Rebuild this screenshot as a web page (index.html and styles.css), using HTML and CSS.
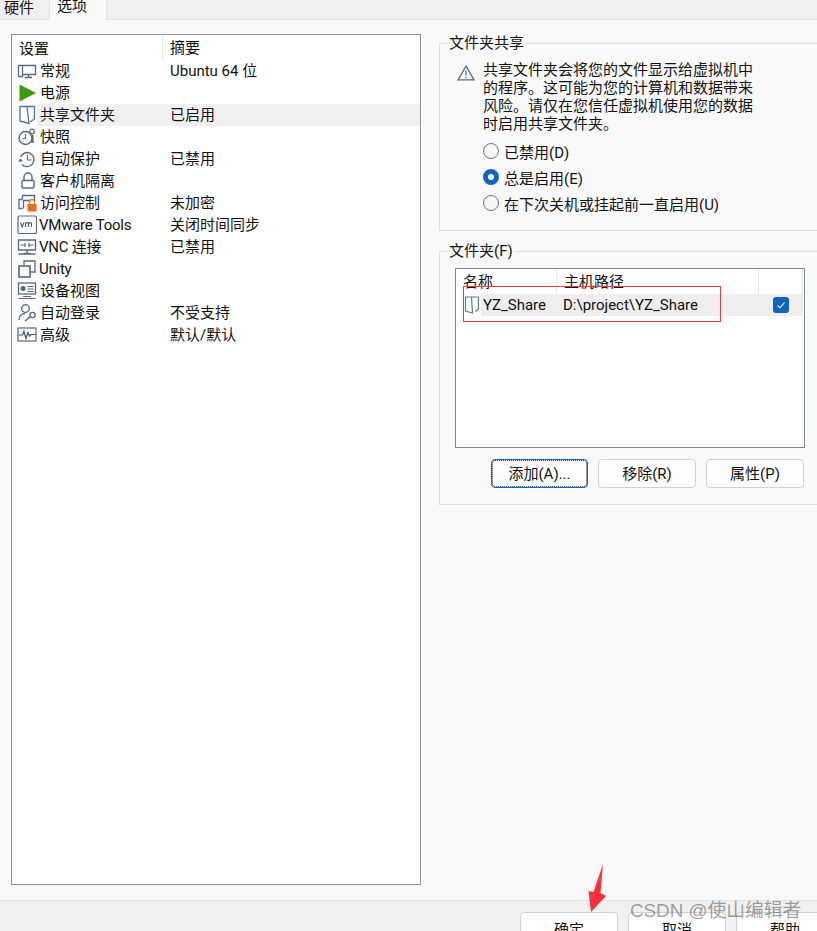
FILE: index.html
```html
<!DOCTYPE html>
<html lang="zh">
<head>
<meta charset="utf-8">
<title>虚拟机设置</title>
<link rel="stylesheet" href="styles.css">
</head>
<body>
<div class="window">
  <div class="tabs">
    <div class="tab">硬件</div>
    <div class="tab active">选项</div>
  </div>
  <div class="content">
    <div class="settings">
      <div class="settings-head"><span class="col-a">设置</span><span class="col-b">摘要</span></div>
      <div class="row">
        <svg class="ico" viewBox="0 0 20 20"><path d="M1.500 4.500h4v11h-4zM6 4.500h12.500v9H6M8 16.500h7M11.500 14v2.500" fill="none" stroke="#56697a" stroke-width="1.300"/></svg>
        <span class="name">常规</span><span class="sum">Ubuntu 64 位</span>
      </div>
      <div class="row">
        <svg class="ico" viewBox="0 0 20 20"><path d="M2.500 1.500 19 10 2.500 18.500z" fill="#3f9a0a"/></svg>
        <span class="name">电源</span>
      </div>
      <div class="row selected">
        <svg class="ico" viewBox="0 0 20 20"><path d="M3 1.500h7l2 17-9-2.500zM10 1.500h7.500V14l-4.500 3" fill="#fff" stroke="#4f7396" stroke-width="1.300"/></svg>
        <span class="name">共享文件夹</span><span class="sum">已启用</span>
      </div>
      <div class="row">
        <svg class="ico" viewBox="0 0 20 20"><circle cx="8.500" cy="11" r="6.500" fill="none" stroke="#56697a" stroke-width="1.400"/><path d="M8.500 7v4.500H5.500" fill="none" stroke="#56697a" stroke-width="1.200"/><circle cx="15" cy="4.500" r="2.300" fill="#fff" stroke="#56697a" stroke-width="1.200"/><path d="M15.500 8v8" stroke="#56697a" stroke-width="2.200"/></svg>
        <span class="name">快照</span>
      </div>
      <div class="row">
        <svg class="ico" viewBox="0 0 20 20"><path d="M3.500 8A7 7 0 1 1 5 15.500" fill="none" stroke="#56697a" stroke-width="1.400"/><path d="M1 12.500h5L3.500 9.500z" fill="#56697a"/><path d="M10.500 6v5H14.500" fill="none" stroke="#56697a" stroke-width="1.200"/></svg>
        <span class="name">自动保护</span><span class="sum">已禁用</span>
      </div>
      <div class="row">
        <svg class="ico" viewBox="0 0 20 20"><path d="M7 9V6a4 4 0 0 1 8 0v3" fill="none" stroke="#56697a" stroke-width="1.400"/><rect x="5" y="9.500" width="12" height="7.500" rx="1" fill="none" stroke="#56697a" stroke-width="1.400"/></svg>
        <span class="name">客户机隔离</span>
      </div>
      <div class="row">
        <svg class="ico" viewBox="0 0 20 20"><path d="M5.500 15.500H2V6.500h3.500M5.500 6.500V2.500h12v5.500" fill="none" stroke="#56697a" stroke-width="1.300"/><path d="M6.500 15.500V7.500h6" fill="none" stroke="#56697a" stroke-width="1.300"/><path d="M12.500 11V9a2.500 2.500 0 0 1 5 0v2" fill="none" stroke="#e9762b" stroke-width="1.300"/><rect x="10.500" y="11" width="9" height="7.500" fill="#ee6a1c"/></svg>
        <span class="name">访问控制</span><span class="sum">未加密</span>
      </div>
      <div class="row">
        <svg class="ico" viewBox="0 0 20 20"><rect x="1" y="1" width="18.500" height="17.500" rx="1.500" fill="#fff" stroke="#56697a" stroke-width="1.200"/><path d="M3.500 7.500l1.700 4.500 1.700-4.500M8.500 12V7.500M8.500 9c.5-1.800 3-1.800 3 0v3M11.500 9c.5-1.800 3-1.800 3 0v3" fill="none" stroke="#465a6b" stroke-width="1.100"/></svg>
        <span class="name narrow">VMware Tools</span><span class="sum">关闭时间同步</span>
      </div>
      <div class="row">
        <svg class="ico" viewBox="0 0 20 20"><path d="M1.500 3h17v10h-17zM7 16.500h6M10 13v3.500M1.500 17h17" fill="none" stroke="#56697a" stroke-width="1.300"/><path d="M3.500 8h4.500M12 8h4.500M8 6v4M12 6v4" stroke="#56697a" stroke-width="1.200"/></svg>
        <span class="name narrow">VNC 连接</span><span class="sum">已禁用</span>
      </div>
      <div class="row">
        <svg class="ico" viewBox="0 0 20 20"><path d="M7 6V2h11v11h-4" fill="none" stroke="#56697a" stroke-width="1.300"/><rect x="2" y="7" width="11" height="11" fill="none" stroke="#56697a" stroke-width="1.600"/></svg>
        <span class="name narrow">Unity</span>
      </div>
      <div class="row">
        <svg class="ico" viewBox="0 0 20 20"><rect x="1.500" y="2" width="17" height="11" fill="none" stroke="#56697a" stroke-width="1.300"/><circle cx="6" cy="7.500" r="2.500" fill="#56697a"/><path d="M10.500 5.500h6M10.500 8h6M10.500 10.500h6M6 15.500h8M1.500 17.500h17" stroke="#56697a" stroke-width="1.200"/></svg>
        <span class="name">设备视图</span>
      </div>
      <div class="row">
        <svg class="ico" viewBox="0 0 20 20"><circle cx="8.500" cy="5.500" r="3.800" fill="none" stroke="#56697a" stroke-width="1.300"/><path d="M2 17c0-4 2.500-6.500 6-6.500" fill="none" stroke="#56697a" stroke-width="1.300"/><circle cx="15.500" cy="12" r="2.600" fill="none" stroke="#56697a" stroke-width="1.300"/><path d="M13.500 13.500 8 18" stroke="#56697a" stroke-width="1.500"/></svg>
        <span class="name">自动登录</span><span class="sum">不受支持</span>
      </div>
      <div class="row">
        <svg class="ico" viewBox="0 0 20 20"><rect x="1" y="3" width="18" height="13" fill="#fff" stroke="#56697a" stroke-width="1.200"/><path d="M1.500 10h4l1.500-3.500 2 7 2-6 1.500 3.500 1.500-1.500h4.500" fill="none" stroke="#3e5161" stroke-width="1.200"/></svg>
        <span class="name">高级</span><span class="sum">默认/默认</span>
      </div>
    </div>
    <div class="side">
      <fieldset class="group share">
        <legend>文件夹共享</legend>
        <div class="notice">
          <svg class="warn" viewBox="0 0 18 16"><path d="M9 1.200 17 14.800H1z" fill="none" stroke="#5c6b78" stroke-width="1.300"/><path d="M9 5.500v5M9 11.700v1.500" stroke="#5c6b78" stroke-width="1.300"/></svg>
          <p>共享文件夹会将您的文件显示给虚拟机中<br>的程序。这可能为您的计算机和数据带来<br>风险。请仅在您信任虚拟机使用您的数据<br>时启用共享文件夹。</p>
        </div>
        <div class="radios">
          <div class="radio"><span class="dot"></span>已禁用(D)</div>
          <div class="radio"><span class="dot on"></span>总是启用(E)</div>
          <div class="radio"><span class="dot"></span>在下次关机或挂起前一直启用(U)</div>
        </div>
      </fieldset>
      <fieldset class="group folders">
        <legend>文件夹(F)</legend>
        <div class="table">
          <div class="thead">
            <span class="th th-name">名称</span><span class="th th-path">主机路径</span><span class="th th-check"></span>
          </div>
          <div class="tr">
            <svg class="fold" viewBox="0 0 16 18"><path d="M1.500 1h6l1 16-7-2zM8 1h6.500v12l-3 2.500" fill="#fff" stroke="#5a7b9c" stroke-width="1.200"/></svg>
            <div class="tr-cells">
              <span class="td-name">YZ_Share</span><span class="td-path">D:\project\YZ_Share</span>
              <span class="check"><svg viewBox="0 0 16 16"><path d="M4.500 8.300 7 10.800l4.500-5.300" fill="none" stroke="#fff" stroke-width="1.100"/></svg></span>
            </div>
          </div>
        </div>
        <div class="actions">
          <button class="btn focus">添加(A)...</button>
          <button class="btn">移除(R)</button>
          <button class="btn">属性(P)</button>
        </div>
      </fieldset>
    </div>
  </div>
  <div class="footer">
    <button class="btn big">确定</button>
    <button class="btn big">取消</button>
    <button class="btn big">帮助</button>
  </div>
  <div class="redbox"></div>
  <svg class="arrow" viewBox="0 0 20 50"><path d="M16 0 13.500 29 19 32 4 48 1.500 27 6.500 28z" fill="#f8303a"/></svg>
  <div class="mark">CSDN @使山编辑者</div>
</div>
</body>
</html>
```
FILE: styles.css
```css
* { box-sizing: border-box; }
html, body { margin: 0; padding: 0; }
body {
  font-family: Roboto, "Noto Sans CJK SC", sans-serif;
  font-size: 15px;
  color: #111;
  background: #f9f9f9;
}
.window {
  position: relative;
  width: 817px;
  height: 931px;
  overflow: hidden;
  display: flex;
  flex-direction: column;
}
.tabs {
  height: 20px;
  flex: none;
  display: flex;
  background: #f0f0f0;
  border-bottom: 1px solid #e3e3e3;
}
.tab {
  width: 50px;
  height: 19px;
  padding-left: 4px;
  line-height: 17px;
  border-right: 1px solid #e3e3e3;
}
.tab.active {
  width: 57px;
  height: 20px;
  padding-left: 7px;
  line-height: 13px;
  background: #f9f9f9;
}
.content {
  flex: 1;
  min-height: 0;
  display: flex;
  padding: 14px 0 15px 11px;
}
.settings {
  width: 410px;
  background: #fff;
  border: 1px solid #8e9199;
}
.settings-head {
  height: 25px;
  display: flex;
  align-items: center;
  margin-bottom: 0;
}
.col-a { width: 150px; padding-left: 7px; }
.col-b { padding-left: 7px; border-left: 1px solid #e5e5e5; height: 24px; line-height: 24px; }
.row {
  height: 22px;
  display: flex;
  align-items: center;
  padding-left: 5px;
  line-height: 22px;
}
.row.selected { background: linear-gradient(to right, transparent 25px, #f0f0f0 25px); }
.ico { width: 20px; height: 20px; flex: none; }
.name { width: 133px; padding-left: 3px; flex: none; white-space: nowrap; }
.name.narrow { padding-left: 2px; letter-spacing: -0.25px; }
.sum { white-space: nowrap; }
.side {
  width: 378px;
  margin-left: 18px;
  display: flex;
  flex-direction: column;
}
.group {
  margin: 0;
  padding: 0;
  min-width: 0;
  border: 1px solid #dedede;
  border-right: 0;
}
.group legend {
  margin-left: 7px;
  padding: 0 2px;
  line-height: 20px;
  height: 20px;
}
.share { height: 198px; margin-top: -1px; }
.notice {
  display: flex;
  padding: 8px 0 0 17px;
}
.warn { width: 18px; height: 16px; flex: none; margin-top: 4px; }
.notice p {
  margin: 0 0 0 8px;
  line-height: 18px;
}
.radios { padding: 5px 0 0 43px; }
.radio {
  height: 26px;
  display: flex;
  align-items: center;
  gap: 5px;
}
.dot {
  width: 16px;
  height: 16px;
  border: 1px solid #727272;
  border-radius: 50%;
  background: #f6f6f6;
  flex: none;
}
.dot.on {
  border: 5px solid #0f65bd;
  background: #fff;
}
.folders { height: 264px; margin-top: 10px; }
.table {
  width: 350px;
  height: 180px;
  margin: 7px 0 0 15px;
  background: #fff;
  border: 1px solid #82868e;
}
.thead {
  height: 25px;
  display: flex;
}
.th {
  height: 25px;
  line-height: 27px;
  border-right: 1px solid #e8e8e8;
  padding-left: 7px;
}
.th-name { width: 101px; }
.th-path { width: 202px; }
.th-check { width: 44px; }
.tr {
  height: 22px;
  display: flex;
  align-items: center;
  padding-left: 8px;
}
.fold { width: 16px; height: 18px; flex: none; }
.tr-cells {
  width: 322px;
  height: 22px;
  margin-left: 1px;
  background: #eeeeee;
  display: flex;
  align-items: center;
  padding-left: 2px;
  line-height: 24px;
}
.td-name { width: 80px; flex: none; }
.td-path { width: 210px; flex: none; }
.check {
  width: 16px;
  height: 16px;
  background: #0f65bd;
  border-radius: 3px;
  flex: none;
  display: block;
}
.check svg { display: block; width: 16px; height: 16px; }
.actions {
  display: flex;
  gap: 10px;
  padding: 11px 0 0 51px;
}
.btn {
  font: inherit;
  color: #111;
  width: 98px;
  height: 29px;
  padding: 0 0 2px;
  background: #fdfdfd;
  border: 1px solid #d0d0d0;
  border-radius: 4px;
}
.btn.focus {
  width: 97px;
  border: 1px solid #0f6cbd;
  outline: 1px dotted #333;
  outline-offset: -2px;
}
.footer {
  flex: none;
  height: 31px;
  background: #f0f0f0;
  border-top: 1px solid #e3e3e3;
  display: flex;
  gap: 10px;
  padding: 11px 0 0 520px;
}
.btn.big {
  flex: none;
  height: 30px;
  line-height: 26px;
  align-self: flex-start;
  padding-top: 4px;
  background: #fff;
}
.redbox {
  position: absolute;
  left: 463px;
  top: 286px;
  width: 258px;
  height: 36px;
  border: 1px solid #ef3b3f;
}
.arrow {
  position: absolute;
  left: 587px;
  top: 864px;
  width: 20px;
  height: 50px;
}
.mark {
  position: absolute;
  left: 630px;
  top: 898px;
  font-family: "Liberation Sans", "Noto Sans CJK SC", sans-serif;
  font-size: 18.8px;
  line-height: 26px;
  color: rgba(70, 70, 70, 0.5);
  white-space: nowrap;
}
```
